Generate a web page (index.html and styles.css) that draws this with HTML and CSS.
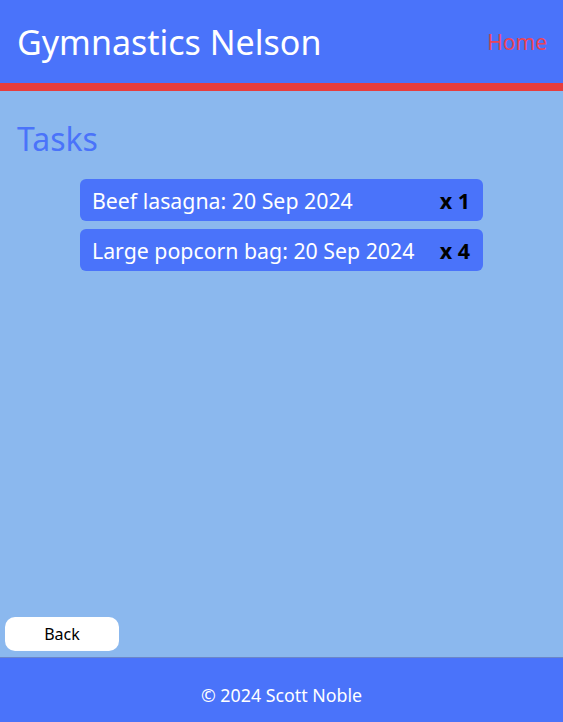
FILE: index.html
```html
<!DOCTYPE html>
<html lang="en">
<head>
<meta charset="utf-8">
<title>Gymnastics Nelson</title>
<link rel="stylesheet" href="styles.css">
</head>
<body>
<div class="page">
  <header class="site-header">
    <h1 class="brand">Gymnastics Nelson</h1>
    <a class="nav-link" href="#">Home</a>
  </header>
  <main class="content">
    <h2 class="title">Tasks</h2>
    <ul class="task-list">
      <li class="task"><span class="task-name">Beef lasagna: 20 Sep 2024</span><span class="task-qty">x 1</span></li>
      <li class="task"><span class="task-name">Large popcorn bag: 20 Sep 2024</span><span class="task-qty">x 4</span></li>
    </ul>
    <div class="actions">
      <button class="back-btn" type="button">Back</button>
    </div>
  </main>
  <footer class="site-footer">© 2024 Scott Noble</footer>
</div>
</body>
</html>
```
FILE: styles.css
```css
* { box-sizing: border-box; }
html, body { margin: 0; padding: 0; height: 100%; }
body {
  font-family: "Noto Sans", "Open Sans", sans-serif;
  background: #8bb8ee;
}
.page {
  min-height: 100vh;
  display: flex;
  flex-direction: column;
}
.site-header {
  background: #4a73fa;
  border-bottom: 8px solid #e63d3d;
  height: 91px;
  display: flex;
  align-items: center;
  justify-content: space-between;
  padding: 0 16px 0 17px;
}
.brand {
  margin: 0;
  font-weight: 400;
  font-size: 34px;
  color: #ffffff;
}
.nav-link {
  color: #ea4458;
  text-decoration: none;
  font-size: 21px;
}
.content {
  flex: 1;
  display: flex;
  flex-direction: column;
  padding: 0 0 6px 0;
}
.title {
  margin: 28px 0 20px 17px;
  font-weight: 400;
  font-size: 32px;
  color: #4a73fa;
  line-height: 40px;
}
.task-list {
  list-style: none;
  margin: 0 auto;
  padding: 0;
  width: 403px;
  display: flex;
  flex-direction: column;
  gap: 8px;
}
.task {
  background: #4a73fa;
  border-radius: 6px;
  height: 42px;
  display: flex;
  align-items: center;
  justify-content: space-between;
  padding: 0 13px 0 12px;
  font-size: 21.3px;
}
.task-name { color: #ffffff; }
.task-qty { color: #000000; font-weight: 700; font-size: 21.5px; }
.actions {
  margin-top: auto;
  padding-left: 5px;
}
.back-btn {
  width: 114px;
  height: 34px;
  background: #ffffff;
  border: none;
  border-radius: 10px;
  font-family: inherit;
  font-size: 16px;
  color: #000;
}
.site-footer {
  background: #4a73fa;
  border-top: 1px solid #6b86c9;
  height: 65px;
  display: flex;
  align-items: center;
  justify-content: center;
  padding-top: 10px;
  color: #ffffff;
  font-size: 17.8px;
}
```
